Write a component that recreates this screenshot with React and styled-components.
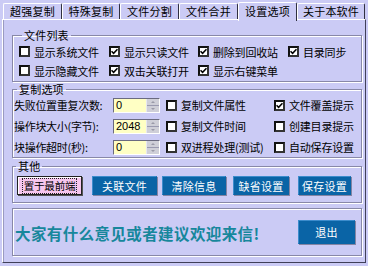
import React from "react";
import styled, { createGlobalStyle } from "styled-components";

const Global = createGlobalStyle`
  body { margin: 0; background: #cbcbf5; }
`;

const Page = styled.div`
  width: 368px;
  height: 266px;
  box-sizing: border-box;
  padding: 2px 2px 3px 2px;
  background: #cbcbf5;
  font-family: "Noto Sans CJK SC", sans-serif;
  font-size: 11px;
  color: #000;
  display: flex;
  flex-direction: column;
  overflow: hidden;
`;

const TabBar = styled.div`
  display: flex;
  align-items: flex-end;
  height: 17px;
  padding-left: 1px;
  position: relative;
  z-index: 1;
`;

const Tab = styled.div`
  width: ${(p) => p.$w}px;
  height: ${(p) => (p.$active ? 19 : 16)}px;
  margin-bottom: ${(p) => (p.$active ? -2 : 0)}px;
  box-sizing: border-box;
  border-top: 1px solid #fff;
  border-left: 1px solid #fff;
  border-right: 1px solid #303040;
  border-radius: 2px 2px 0 0;
  background: #cbcbf5;
  display: flex;
  align-items: center;
  justify-content: center;
  padding-bottom: ${(p) => (p.$active ? 2 : 0)}px;
  letter-spacing: 0.2px;
  line-height: 1;
`;

const Panel = styled.div`
  flex: 1;
  border-top: 1px solid #fff;
  border-left: 1px solid #fff;
  border-right: 1px solid #404058;
  border-bottom: 1px solid #404058;
  box-shadow: inset 1px 0 0 #9a9ac0;
  padding: 9px 3px 0 9px;
  display: flex;
  flex-direction: column;
`;

const Group = styled.fieldset`
  margin: ${(p) => p.$mt || 0}px 0 0 0;
  padding: ${(p) => p.$pad};
  border: 1px solid #8888a8;
  box-shadow: 1px 1px 0 #fff, inset 1px 1px 0 #fff;
  min-width: 0;
`;

const Legend = styled.legend`
  padding: 0 2px;
  margin-left: 3px;
  line-height: 12px;
  height: 12px;
  letter-spacing: 0.2px;
`;

const CheckGrid = styled.div`
  display: grid;
  grid-template-columns: 90px 89px 90px auto;
  grid-auto-rows: 19px;
  align-items: center;
`;

const CheckItem = styled.label`
  display: flex;
  align-items: center;
  gap: 4px;
  white-space: nowrap;
  letter-spacing: -0.2px;
`;

const Box = styled.span`
  width: 11px;
  height: 11px;
  box-sizing: border-box;
  border: 2px solid #111;
  border-right-color: #333;
  border-bottom-color: #333;
  background: #fff;
  display: flex;
  align-items: center;
  justify-content: center;
  flex: none;
`;

const Check = ({ checked, children }) => (
  <CheckItem>
    <Box>
      {checked && (
        <svg width="7" height="7" viewBox="0 0 7 7">
          <path d="M0.5 3.2 L2.6 5.3 L6.5 1.2" fill="none" stroke="#000" strokeWidth="1.6" />
        </svg>
      )}
    </Box>
    {children}
  </CheckItem>
);

const CopyGrid = styled.div`
  display: grid;
  grid-template-columns: 99px 53px 108px auto;
  grid-auto-rows: 20px;
  row-gap: 1px;
  align-items: center;
`;

const FieldLabel = styled.span`
  white-space: nowrap;
  letter-spacing: -0.3px;
`;

const Spin = styled.div`
  display: flex;
  width: 47px;
  height: 15px;
  box-sizing: border-box;
  border-top: 1px solid #6a6a80;
  border-left: 1px solid #6a6a80;
  border-bottom: 1px solid #fff;
  border-right: 1px solid #fff;
`;

const SpinInput = styled.div`
  flex: 1;
  background: #ffffc4;
  font-family: "Liberation Sans", sans-serif;
  font-size: 11px;
  line-height: 13px;
  padding-left: 2px;
`;

const SpinButtons = styled.div`
  width: 12px;
  background: #cfcfd8;
  display: flex;
  flex-direction: column;
  border-left: 1px solid #e8e8f0;
`;

const SpinHalf = styled.div`
  flex: 1;
  display: flex;
  align-items: center;
  justify-content: center;
  border-bottom: ${(p) => (p.$top ? "1px solid #9a9ab0" : "none")};
  &::after {
    content: "";
    border-left: 2px solid transparent;
    border-right: 2px solid transparent;
    ${(p) => (p.$top ? "border-bottom: 2px solid #9a9aa8;" : "border-top: 2px solid #9a9aa8;")}
  }
`;

const Spinner = ({ value }) => (
  <Spin>
    <SpinInput>{value}</SpinInput>
    <SpinButtons>
      <SpinHalf $top />
      <SpinHalf />
    </SpinButtons>
  </Spin>
);

const ButtonRow = styled.div`
  display: flex;
  align-items: center;
  padding-left: 4px;
`;

const Button = styled.div`
  width: ${(p) => p.$w}px;
  height: ${(p) => p.$h || 19}px;
  margin-left: ${(p) => p.$ml || 0}px;
  box-sizing: border-box;
  display: flex;
  align-items: center;
  justify-content: center;
  background: #0a64a6;
  color: #fff;
  border: 1px solid #0a64a6;
  border-top-color: #3c8ccc;
  border-left-color: #3c8ccc;
  box-shadow: 1px 1px 0 #8484a4;
  letter-spacing: 0.3px;
  white-space: nowrap;
  flex: none;
`;

const PinkButton = styled.div`
  width: ${(p) => p.$w}px;
  height: 19px;
  box-sizing: border-box;
  display: flex;
  align-items: center;
  justify-content: center;
  background: #f6c6ee;
  border: 1px solid #222;
  box-shadow: 1px 1px 0 #555, inset 1px 1px 0 #fff;
  white-space: nowrap;
  flex: none;
`;

const Focus = styled.span`
  border: 1px dotted #222;
  padding: 0 1px;
  font-size: 10.5px;
  line-height: 14px;
  letter-spacing: -0.2px;
`;

const Footer = styled.div`
  margin-top: 5px;
  height: 48px;
  box-sizing: border-box;
  border: 1px solid #8888a8;
  box-shadow: 1px 1px 0 #fff, inset 1px 1px 0 #fff;
  display: flex;
  align-items: center;
  justify-content: space-between;
  padding: 0 6px 0 2px;
`;

const Slogan = styled.div`
  font-size: 15.5px;
  font-weight: bold;
  color: #17879c;
  letter-spacing: 0.4px;
  padding-top: 2px;
`;

export default function App() {
  return (
    <Page>
      <Global />
      <TabBar>
        <Tab $w={59}>超强复制</Tab>
        <Tab $w={58}>特殊复制</Tab>
        <Tab $w={59}>文件分割</Tab>
        <Tab $w={59}>文件合并</Tab>
        <Tab $w={59} $active>设置选项</Tab>
        <Tab $w={68}>关于本软件</Tab>
      </TabBar>
      <Panel>
        <Group $pad="1px 0 1px 6px">
          <Legend>文件列表</Legend>
          <CheckGrid>
            <Check>显示系统文件</Check>
            <Check checked>显示只读文件</Check>
            <Check checked>删除到回收站</Check>
            <Check checked>目录同步</Check>
            <Check>显示隐藏文件</Check>
            <Check checked>双击关联打开</Check>
            <Check checked>显示右键菜单</Check>
          </CheckGrid>
        </Group>
        <Group $mt={1} $pad="0 0 0 1px">
          <Legend>复制选项</Legend>
          <CopyGrid>
            <FieldLabel>失败位置重复次数:</FieldLabel>
            <Spinner value="0" />
            <Check>复制文件属性</Check>
            <Check checked>文件覆盖提示</Check>
            <FieldLabel>操作块大小(字节):</FieldLabel>
            <Spinner value="2048" />
            <Check>复制文件时间</Check>
            <Check>创建目录提示</Check>
            <FieldLabel>块操作超时(秒):</FieldLabel>
            <Spinner value="0" />
            <Check>双进程处理(测试)</Check>
            <Check>自动保存设置</Check>
          </CopyGrid>
        </Group>
        <Group $mt={2} $pad="4px 0 7px 0">
          <Legend>其他</Legend>
          <ButtonRow>
            <PinkButton $w={65}>
              <Focus>置于最前端</Focus>
            </PinkButton>
            <Button $w={65} $ml={10}>关联文件</Button>
            <Button $w={64} $ml={5}>清除信息</Button>
            <Button $w={56} $ml={7}>缺省设置</Button>
            <Button $w={53} $ml={9}>保存设置</Button>
          </ButtonRow>
        </Group>
        <Footer>
          <Slogan>大家有什么意见或者建议欢迎来信!</Slogan>
          <Button $w={57} $h={24}>退出</Button>
        </Footer>
      </Panel>
    </Page>
  );
}
